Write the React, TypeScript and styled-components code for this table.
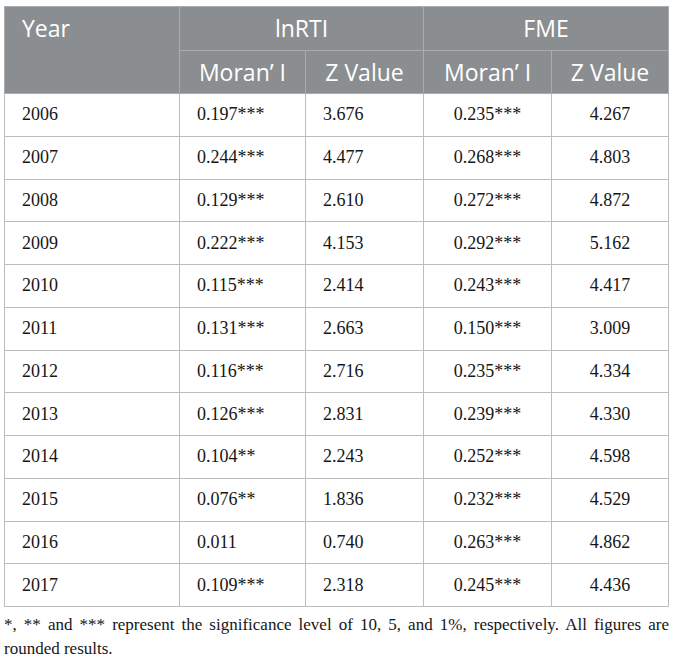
import React from 'react';
import styled, { createGlobalStyle } from 'styled-components';

const rows: [string, string, string, string, string][] = [
  ['2006', '0.197***', '3.676', '0.235***', '4.267'],
  ['2007', '0.244***', '4.477', '0.268***', '4.803'],
  ['2008', '0.129***', '2.610', '0.272***', '4.872'],
  ['2009', '0.222***', '4.153', '0.292***', '5.162'],
  ['2010', '0.115***', '2.414', '0.243***', '4.417'],
  ['2011', '0.131***', '2.663', '0.150***', '3.009'],
  ['2012', '0.116***', '2.716', '0.235***', '4.334'],
  ['2013', '0.126***', '2.831', '0.239***', '4.330'],
  ['2014', '0.104**', '2.243', '0.252***', '4.598'],
  ['2015', '0.076**', '1.836', '0.232***', '4.529'],
  ['2016', '0.011', '0.740', '0.263***', '4.862'],
  ['2017', '0.109***', '2.318', '0.245***', '4.436'],
];

// first three columns left, FME columns centered
const aligns: Array<'left' | 'center'> = ['left', 'left', 'left', 'center', 'center'];

const App: React.FC = () => (
  <>
    <GlobalStyle />
    <Page>
      <Table>
        <colgroup>
          <col style={{ width: 175 }} />
          <col style={{ width: 126 }} />
          <col style={{ width: 118 }} />
          <col style={{ width: 128 }} />
          <col style={{ width: 117 }} />
        </colgroup>
        <thead>
          <HeadRow>
            <HeadCell rowSpan={2} $align="left" $top>
              Year
            </HeadCell>
            <HeadCell colSpan={2}>lnRTI</HeadCell>
            <HeadCell colSpan={2}>FME</HeadCell>
          </HeadRow>
          <HeadRow>
            <HeadCell>Moran’ I</HeadCell>
            <HeadCell>Z Value</HeadCell>
            <HeadCell>Moran’ I</HeadCell>
            <HeadCell>Z Value</HeadCell>
          </HeadRow>
        </thead>
        <tbody>
          {rows.map((row) => (
            <BodyRow key={row[0]}>
              {row.map((value, i) => (
                <Cell key={i} $align={aligns[i]}>
                  {value}
                </Cell>
              ))}
            </BodyRow>
          ))}
        </tbody>
      </Table>
      <Footnote>
        *, ** and *** represent the significance level of 10, 5, and 1%, respectively. All figures are
        rounded results.
      </Footnote>
    </Page>
  </>
);

export default App;

const GlobalStyle = createGlobalStyle`
  html, body {
    margin: 0;
    padding: 0;
    background: #ffffff;
  }
`;

const Page = styled.div`
  width: 665px;
  padding: 6px 0 0 4px;
`;

const Table = styled.table`
  width: 665px;
  table-layout: fixed;
  border-collapse: collapse;
  border: 1px solid #c4c4c4;
`;

const HeadRow = styled.tr`
  height: 43.5px;
  background: #8b8e91;
`;

interface ICell {
  $align?: 'left' | 'center';
  $top?: boolean;
}

const HeadCell = styled.th<ICell>`
  padding: 0 17px;
  border: 1px solid #a9abad;
  color: #ffffff;
  font-family: 'Open Sans', 'Liberation Sans', sans-serif;
  font-size: 23px;
  font-weight: 400;
  text-align: ${({ $align = 'center' }) => $align};
  vertical-align: ${({ $top }) => ($top ? 'top' : 'middle')};
  padding-top: ${({ $top }) => ($top ? '5px' : '0')};
  white-space: nowrap;
`;

const BodyRow = styled.tr`
  height: 42.75px;
`;

const Cell = styled.td<ICell>`
  padding: 0 17px;
  border: 1px solid #bdbdbd;
  color: #161616;
  font-family: 'Liberation Serif', 'Times New Roman', serif;
  font-size: 18px;
  text-align: ${({ $align = 'left' }) => $align};
  vertical-align: middle;
  white-space: nowrap;
`;

const Footnote = styled.p`
  margin: 6px 0 0;
  width: 665px;
  color: #161616;
  font-family: 'Liberation Serif', 'Times New Roman', serif;
  font-size: 17px;
  line-height: 24px;
  text-align: justify;
`;
